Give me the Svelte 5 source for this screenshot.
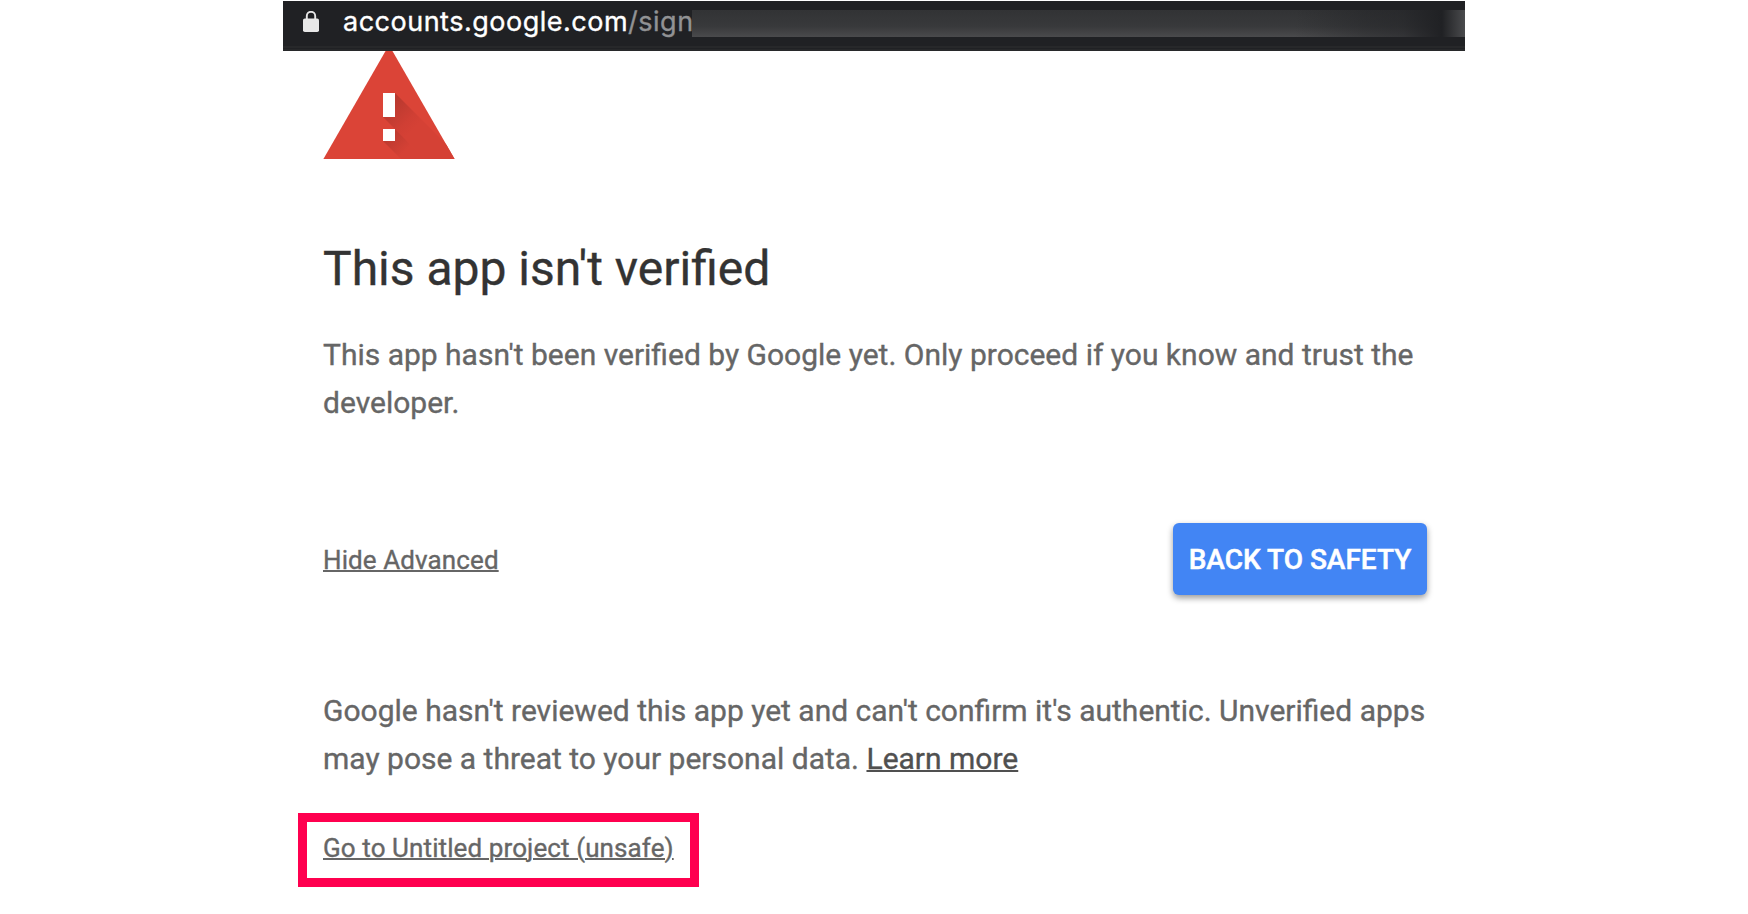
<script lang="ts">
  const host = "accounts.google.com";
  const path = "/sign";
</script>

<main>
  <header>
    <svg class="lock" width="16" height="22" viewBox="0 0 16 22">
      <path d="M3.8 9V5a4.2 4.2 0 0 1 8.4 0v4" fill="none" stroke="#e8e8e8" stroke-width="1.9" />
      <rect y="7.5" width="16" height="13.5" rx="1.8" fill="#e8e8e8" />
    </svg>
    <p class="url"><span class="host">{host}</span><span class="path">{path}</span></p>
    <div class="redacted"></div>
  </header>

  <section>
    <svg class="warning" width="132" height="108" viewBox="0 0 132 108">
      <defs>
        <clipPath id="triangle">
          <path d="M66-6 131.6 108H.4z" />
        </clipPath>
        <linearGradient id="shade" gradientUnits="userSpaceOnUse" x1="66" y1="55" x2="90" y2="79">
          <stop offset="0" stop-color="#b9392f" />
          <stop offset="0.7" stop-color="#d03f34" />
          <stop offset="1" stop-color="#d54135" />
        </linearGradient>
        <linearGradient id="dot-shade" gradientUnits="userSpaceOnUse" x1="64" y1="82" x2="82" y2="100">
          <stop offset="0" stop-color="#b9392f" />
          <stop offset="1" stop-color="#d54135" />
        </linearGradient>
      </defs>
      <g clip-path="url(#triangle)">
        <path d="M0-6h132v114H0z" fill="#db4437" />
        <path d="M72 42 138 108H102L60 66z" fill="url(#shade)" />
        <path d="M72 78 102 108H78L60 90z" fill="url(#dot-shade)" />
      </g>
      <path d="M60 42h12v24H60zM60 78h12v12H60z" fill="#fff" />
    </svg>

    <h1>This app isn't verified</h1>
    <p>
      This app hasn't been verified by Google yet. Only proceed if you know and
      trust the developer.
    </p>

    <div class="actions">
      <a class="toggle" href="/">Hide Advanced</a>
      <button>Back to safety</button>
    </div>

    <p>
      Google hasn't reviewed this app yet and can't confirm it's authentic.
      Unverified apps may pose a threat to your personal data.
      <a class="more" href="/">Learn more</a>
    </p>

    <div class="highlight">
      <a href="/">Go to Untitled project (unsafe)</a>
    </div>
  </section>
</main>

<style>
  :global(body) {
    background: #fff;
  }

  main {
    width: 1182px;
    height: 914px;
    margin: 0 auto;
    padding-top: 1px;
    box-sizing: border-box;
    font-family: Roboto, sans-serif;
    color: #666;
    -webkit-text-stroke: 0.35px;
  }

  header {
    height: 50px;
    padding: 0 0 13px 20px;
    box-sizing: border-box;
    display: flex;
    align-items: center;
    background: linear-gradient(#202124 45px, #27282a 45px, #27282a 47px, #202124 47px, #202124 48px, #27282a 48px);
  }

  .lock {
    margin: 5px 24px 0 0;
  }

  .url {
    width: 349px;
    margin: 5px 0 0;
    font-family: Inter, sans-serif;
    font-size: 27px;
    line-height: 34px;
    letter-spacing: 0.5px;
    white-space: nowrap;
  }

  .host {
    color: #fff;
  }

  .path {
    color: #919294;
  }

  .redacted {
    flex: 1;
    height: 27px;
    margin-top: 8px;
    background:
      linear-gradient(90deg, transparent 78%, #20212466 87%, #20212488 92%, #202124 97%, #4a4b4d 100%),
      linear-gradient(#323335, #38393b 60%, #4a4a4c);
  }

  section {
    padding: 0 38px 0 40px;
  }

  .warning {
    display: block;
  }

  h1 {
    margin: 78px 0 30px;
    font-size: 48px;
    font-weight: 400;
    line-height: 64px;
    color: #333;
  }

  p {
    margin: 0;
    font-size: 30px;
    line-height: 48px;
  }

  a {
    color: #666;
    font-size: 26px;
    letter-spacing: 0.1px;
    text-decoration: underline;
    text-decoration-thickness: 2px;
  }

  .toggle {
    padding-top: 2px;
  }

  .more {
    color: #505050;
    font-size: 30px;
    letter-spacing: normal;
  }

  .actions {
    width: 1104px;
    margin: 96px 0 92px;
    display: flex;
    align-items: center;
    justify-content: space-between;
  }

  button {
    width: 254px;
    height: 72px;
    padding: 0;
    border: none;
    border-radius: 6px;
    background: #4285f4;
    box-shadow: 0 3px 6px rgba(0, 0, 0, 0.4);
    color: #fff;
    font: 500 28px Roboto, sans-serif;
    text-transform: uppercase;
    white-space: nowrap;
    cursor: pointer;
    -webkit-text-stroke: 0.5px;
  }

  .highlight {
    width: 401px;
    height: 74px;
    margin: 30px 0 0 -25px;
    padding: 0 0 4px 16px;
    box-sizing: border-box;
    border: 9px solid #ff004f;
    display: flex;
    align-items: center;
    white-space: nowrap;
  }
</style>
